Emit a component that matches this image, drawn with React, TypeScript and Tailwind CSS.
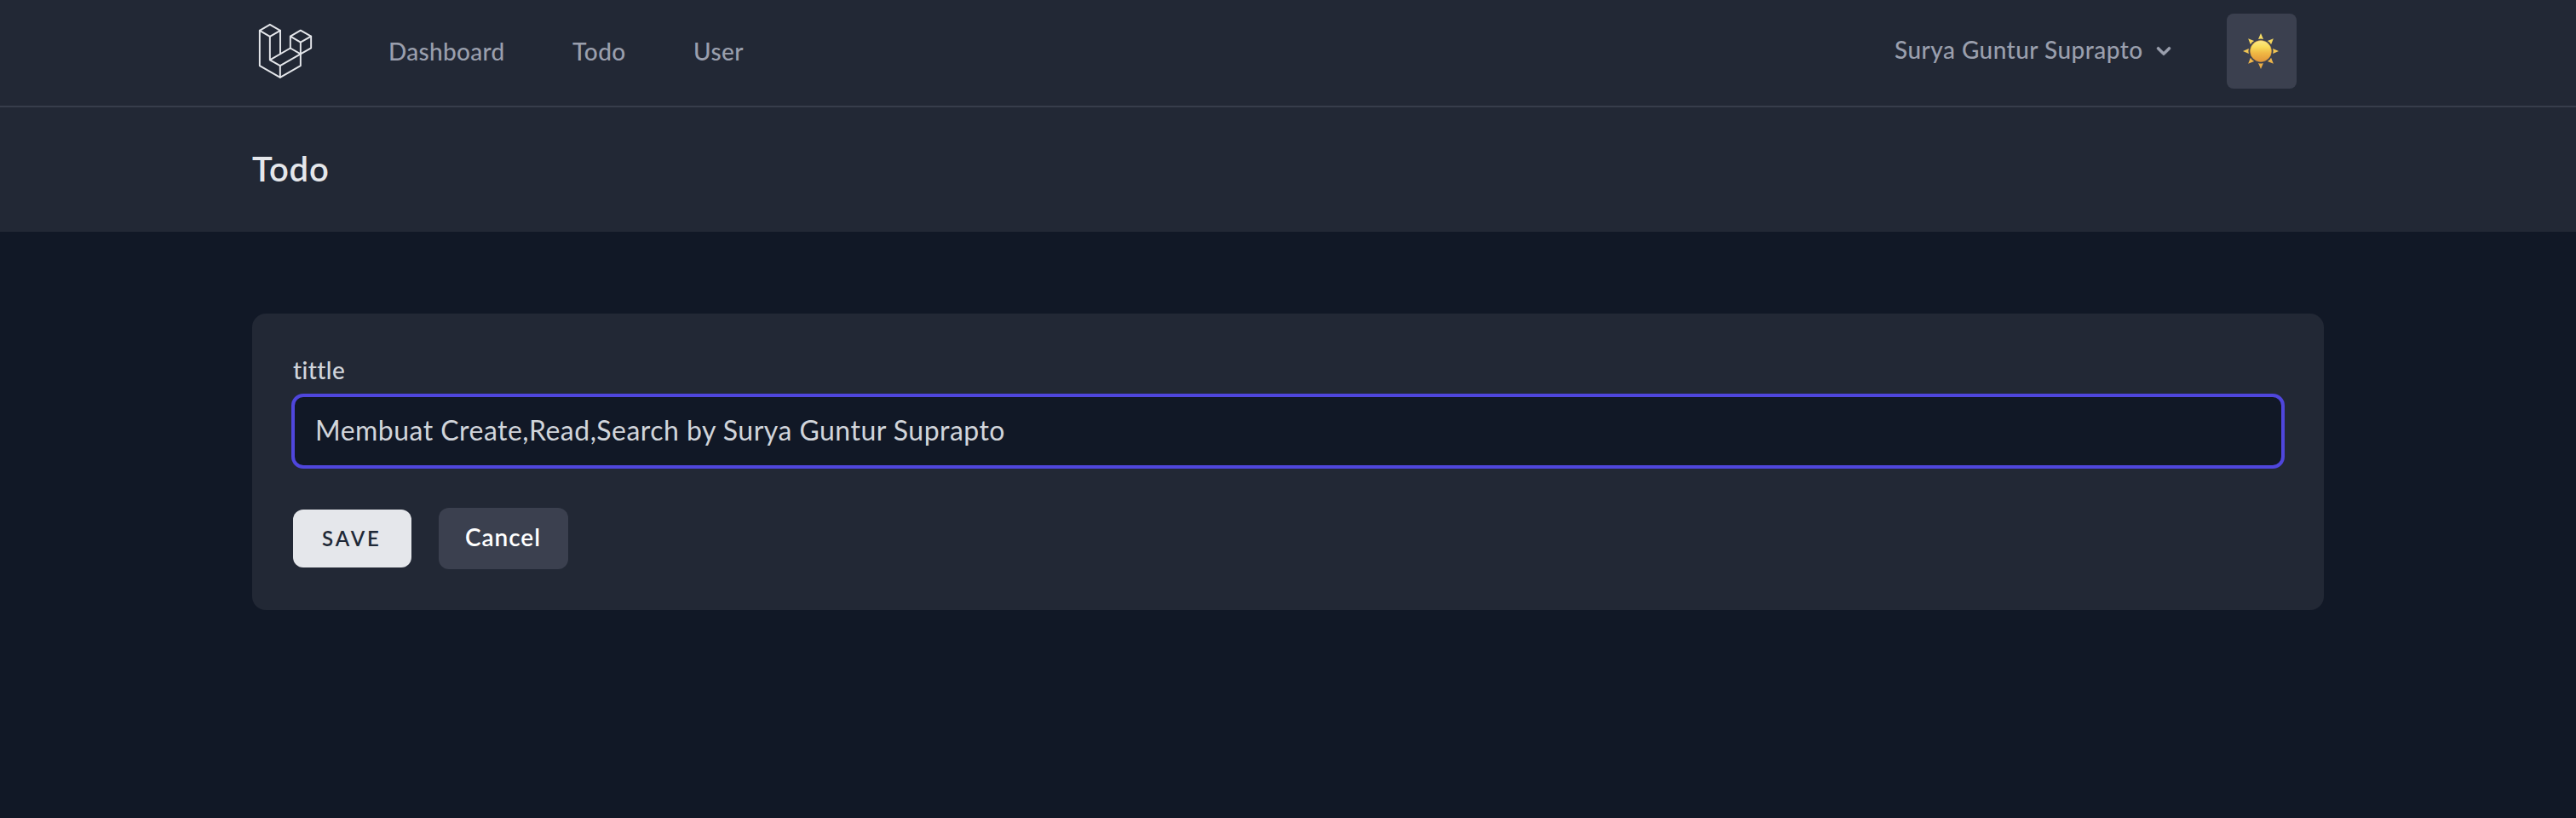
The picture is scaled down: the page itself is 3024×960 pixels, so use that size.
function Logo() {
  return (
    <svg viewBox="48 78 216 216" className="size-[72px]" fill="none" stroke="#e5e7eb" strokeWidth="5.8" strokeLinejoin="round" strokeLinecap="round">
      <path d="M110.5 86.5 147 107.5 110.5 128.5 74.5 107.5Z" />
      <path d="M74.5 107.5V231.5L146.5 272.5 218.5 231.5V190" />
      <path d="M110.5 128.5V211L146.5 231.5 218.5 190 182.5 169.5 110.5 211" />
      <path d="M146.5 231.5V272.5M147 107.5V190" />
      <path d="M218.5 107 255.5 128 218.5 149 182.5 128Z" />
      <path d="M182.5 128V169.5M218.5 149V190L255.5 169V128" />
    </svg>
  );
}

function Sun() {
  const angles = [0, 45, 90, 135, 180, 225, 270, 315];
  return (
    <svg viewBox="0 0 42 42" className="size-[42px]">
      <defs>
        <linearGradient id="disc" x1="0" y1="0" x2="0" y2="1">
          <stop offset="0" stopColor="#fbe88a" />
          <stop offset="0.3" stopColor="#f8dc5a" />
          <stop offset="0.6" stopColor="#efb743" />
          <stop offset="1" stopColor="#e2963a" />
        </linearGradient>
        <linearGradient id="rays" gradientUnits="userSpaceOnUse" x1="0" y1="0" x2="0" y2="42">
          <stop offset="0" stopColor="#f8e266" />
          <stop offset="1" stopColor="#e9a843" />
        </linearGradient>
        <mask id="rayMask">
          {angles.map((a) => (
            <path key={a} d="M21 0 24 6.9Q21 5.9 18 6.9Z" fill="#fff" transform={`rotate(${a} 21 21)`} />
          ))}
        </mask>
      </defs>
      <rect width="42" height="42" fill="url(#rays)" mask="url(#rayMask)" />
      <circle cx="21" cy="21" r="12.5" fill="url(#disc)" stroke="#d99a3c" strokeWidth="0.5" />
    </svg>
  );
}

export default function App() {
  return (
    <div className="flex h-[960px] w-full flex-col bg-[#111826] font-['Lato',sans-serif]">
      <nav className="h-[126px] border-b-2 border-[#373d4b] bg-[#222835]">
        <div className="mx-auto flex h-[124px] w-[2432px] items-center pr-8">
          <Logo />
          <div className="ml-[88px] flex gap-20 pb-1 text-[28px] leading-10 font-medium whitespace-nowrap text-[#9a9fad]">
            <a className="w-[136px] tracking-[0.3px]">Dashboard</a>
            <a className="w-[62px] tracking-[0.5px]">Todo</a>
            <a className="tracking-[0.4px]">User</a>
          </div>
          <button className="mr-[58px] ml-auto flex items-center gap-2 pb-1 text-[28px] leading-10 font-medium whitespace-nowrap text-[#9a9fad]">
            <span className="w-[292px] pb-1 text-left tracking-[0.46px]">Surya Guntur Suprapto</span>
            <svg viewBox="0 0 20 20" className="size-8" fill="currentColor" stroke="currentColor" strokeWidth="0.3">
              <path fillRule="evenodd" clipRule="evenodd" d="M5.293 7.293a1 1 0 011.414 0L10 10.586l3.293-3.293a1 1 0 111.414 1.414l-4 4a1 1 0 01-1.414 0l-4-4a1 1 0 010-1.414z" />
            </svg>
          </button>
          <button className="mt-4 flex h-[88px] w-[82px] items-center justify-center self-start rounded-lg bg-[#3b404f] pr-0.5 pb-px">
            <Sun />
          </button>
        </div>
      </nav>

      <header className="h-[146px] bg-[#222835]">
        <div className="mx-auto w-[2432px] pt-[47px]">
          <h2 className="text-[40px] leading-[50px] font-semibold tracking-[0.9px] text-[#e5e7eb]">Todo</h2>
        </div>
      </header>

      <main className="mx-auto w-[2432px] pt-24">
        <form className="h-[348px] rounded-2xl bg-[#222835] p-12">
          <label htmlFor="title" className="block pt-px text-[28px] leading-[34px] font-medium tracking-[0.4px] text-[#d1d5db]">tittle</label>
          <div className="-mx-0.5 mt-[11px]">
            <input
              id="title"
              type="text"
              defaultValue="Membuat Create,Read,Search by Surya Guntur Suprapto"
              className="block h-[88px] w-full rounded-[14px] border-4 border-[#4f46dc] bg-[#111826] pb-[3px] pl-6 text-[32px] tracking-[0.47px] text-[#d1d5db] outline-none"
            />
          </div>
          <div className="mt-[46px] flex items-center gap-8">
            <button type="button" className="h-[68px] w-[139px] rounded-xl bg-[#e5e7eb] pb-px pl-[34px] text-left text-[24px] leading-8 font-semibold tracking-[2.87px] text-[#1f2937]">SAVE</button>
            <button type="button" className="h-[72px] w-[152px] rounded-xl bg-[#3b404f] pb-1 pl-[31px] text-left text-[28px] leading-10 font-semibold tracking-[0.95px] text-white">Cancel</button>
          </div>
        </form>
      </main>
    </div>
  );
}
